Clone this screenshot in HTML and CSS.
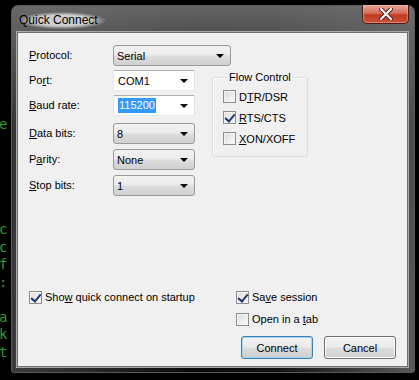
FILE: index.html
```html
<!DOCTYPE html>
<html lang="en">

<head>
    <meta charset="UTF-8">
    <title>Quick Connect</title>
    <link rel="stylesheet" href="styles.css">
</head>

<body>
    <pre class="term">e





c
c
f
:

a
k
t</pre>

    <div class="win">
        <div class="titlebar">
            <span class="title">Quick Connect</span>
            <span class="close">
                <svg width="14" height="12" viewBox="0 0 14 12">
                    <path d="M2 1 L12 11 M12 1 L2 11" stroke="#5a1a12" stroke-width="4" stroke-linecap="round" />
                    <path d="M2 1 L12 11 M12 1 L2 11" stroke="#fff" stroke-width="2.2" stroke-linecap="round" />
                </svg>
            </span>
        </div>

        <div class="client">
            <div class="top">
                <label class="lbl r1"><u>P</u>rotocol:</label>
                <div class="combo wide r1">Serial</div>

                <label class="lbl r2">Po<u>r</u>t:</label>
                <div class="combo edit r2">COM1</div>

                <label class="lbl r3"><u>B</u>aud rate:</label>
                <div class="combo edit r3"><span class="sel">115200</span></div>

                <label class="lbl r4"><u>D</u>ata bits:</label>
                <div class="combo r4">8</div>

                <label class="lbl r5">P<u>a</u>rity:</label>
                <div class="combo r5">None</div>

                <label class="lbl r6"><u>S</u>top bits:</label>
                <div class="combo r6">1</div>

                <fieldset class="flow">
                    <legend>Flow Control</legend>
                    <div class="chk"><span class="box"></span><span>D<u>T</u>R/DSR</span></div>
                    <div class="chk"><span class="box on"></span><span><u>R</u>TS/CTS</span></div>
                    <div class="chk"><span class="box"></span><span><u>X</u>ON/XOFF</span></div>
                </fieldset>
            </div>

            <div class="bottom">
                <div class="chk"><span class="box on"></span><span>Sho<u>w</u> quick connect on startup</span></div>
                <div class="chk"><span class="box on"></span><span>Sa<u>v</u>e session</span></div>
                <div></div>
                <div class="chk"><span class="box"></span><span>Open in a <u>t</u>ab</span></div>
                <div class="buttons">
                    <button class="btn def">Connect</button>
                    <button class="btn">Cancel</button>
                </div>
            </div>
        </div>
    </div>
</body>

</html>
```

FILE: styles.css
```css
* {
    box-sizing: border-box;
}

html,
body {
    margin: 0;
    height: 100%;
}

body {
    background-color: #000;
    font-family: "Liberation Sans", Arial, sans-serif;
    font-size: 11px;
    color: #000;
    position: relative;
    overflow: hidden;
}

u {
    text-decoration: underline;
    text-underline-offset: 1px;
}

.term {
    margin: 0 0 0 -1px;
    padding-top: 116px;
    font-family: "DejaVu Sans Mono", monospace;
    font-size: 14px;
    line-height: 17.5px;
    color: #2e9b2e;
}

/* window frame */
.win {
    position: absolute;
    left: 11px;
    top: 5px;
    width: 404px;
    height: 368px;
    border: 1px solid #5a5a5a;
    border-radius: 7px 7px 3px 3px;
    background:
        linear-gradient(to bottom, rgba(110, 110, 110, 0.9), rgba(20, 20, 20, 0.2) 120px, rgba(0, 0, 0, 0)),
        linear-gradient(to right, #3c3c3c, #232323 25%, #080808 45%, #101010 65%, #3a3a3a 85%, #5a5a5a);
    padding: 0 6px 5px 5px;
    display: flex;
    flex-direction: column;
}

.titlebar {
    height: 26px;
    flex: none;
}

.title {
    display: inline-block;
    margin: 6px 0 0 1px;
    padding: 1px 8px 2px 1px;
    font-size: 12px;
    color: #000;
    border-radius: 10px;
    background: radial-gradient(ellipse at center, rgba(225, 225, 225, 0.85) 45%, rgba(200, 200, 200, 0) 72%);
}

.close {
    position: absolute;
    right: 5px;
    top: -1px;
    width: 47px;
    height: 19px;
    border: 1px solid #4a1d16;
    border-top: none;
    border-radius: 0 0 5px 5px;
    background: linear-gradient(to bottom, #e8a597, #d5705e 45%, #c13c22 55%, #c7533a);
    box-shadow: inset 0 0 0 1px rgba(255, 200, 190, 0.4);
    display: flex;
    align-items: center;
    justify-content: center;
}

.client {
    flex: 1;
    background-color: #f0f0f0;
    border: 1px solid #6e6e6e;
    box-shadow: 0 0 0 1px #a8a8a8;
    padding: 12px 11px 7px 11px;
    display: flex;
    flex-direction: column;
}

/* field grid */
.top {
    display: grid;
    grid-template-columns: 84px 82px 17px 96px;
    grid-template-rows: 25px 25px 28px 26px 26px 21px;
}

.lbl {
    grid-column: 1;
    height: 21px;
    line-height: 21px;
}

.r1 { grid-row: 1; }
.r2 { grid-row: 2; }
.r3 { grid-row: 3; }
.r4 { grid-row: 4; }
.r5 { grid-row: 5; }
.r6 { grid-row: 6; }

.combo {
    grid-column: 2;
    height: 21px;
    border: 1px solid #9a9a9a;
    border-radius: 3px;
    background: linear-gradient(to bottom, #f3f3f3, #ebebeb 48%, #dddddd 52%, #d0d0d0);
    display: flex;
    align-items: center;
    padding-left: 3px;
    position: relative;
}

.combo::after {
    content: "";
    position: absolute;
    right: 6px;
    top: 8px;
    border-left: 4px solid transparent;
    border-right: 4px solid transparent;
    border-top: 4px solid #000;
}

.combo.wide {
    grid-column: 2 / span 3;
    width: 118px;
}

.combo.edit {
    background: #fff;
    border-color: #abadb3 #dbdfe6 #e3e9ef #e2e3ea;
    border-radius: 2px;
    padding-left: 4px;
}

.sel {
    background-color: #3399ff;
    color: #fff;
    line-height: 15px;
    padding: 0 1px;
}

/* flow control group */
.flow {
    grid-column: 4;
    grid-row: 2 / span 4;
    align-self: start;
    margin: 1px 0 0 0;
    padding: 3px 0 0 10px;
    height: 86px;
    border: 1px solid #d5dfe5;
    border-radius: 3px;
    box-shadow: inset 1px 1px 0 #fff;
}

.flow legend {
    padding: 0 2px;
    margin-left: 4px;
}

.flow .chk {
    height: 21px;
}

.chk {
    display: flex;
    align-items: center;
    white-space: nowrap;
}

.box {
    width: 13px;
    height: 13px;
    border: 1px solid #8e8f8f;
    background: linear-gradient(135deg, #dcdcdc, #fbfbfb);
    box-shadow: inset 0 0 0 1px #f4f4f4;
    margin-right: 3px;
    flex: none;
    position: relative;
}

.box.on::after {
    content: "";
    position: absolute;
    left: 3px;
    top: 0px;
    width: 4px;
    height: 8px;
    border: solid #223a6e;
    border-width: 0 2px 2px 0;
    transform: rotate(40deg);
}

/* bottom area */
.bottom {
    margin-top: auto;
    display: grid;
    grid-template-columns: 207px 1fr;
    grid-template-rows: 22px 22px 29px;
}

.buttons {
    grid-column: 1 / span 2;
    display: flex;
    justify-content: flex-end;
    align-items: flex-end;
    gap: 11px;
}

.btn {
    width: 72px;
    height: 23px;
    border: 1px solid #707070;
    border-radius: 3px;
    background: linear-gradient(to bottom, #f2f2f2, #ebebeb 48%, #dddddd 52%, #cfcfcf);
    box-shadow: inset 0 0 0 1px #fbfbfb;
    font-family: "Liberation Sans", Arial, sans-serif;
    font-size: 11px;
    color: #000;
    padding: 0;
}

.btn.def {
    border-color: #3c7fb1;
    box-shadow: inset 0 0 0 1px #9fd8f3;
}
```
